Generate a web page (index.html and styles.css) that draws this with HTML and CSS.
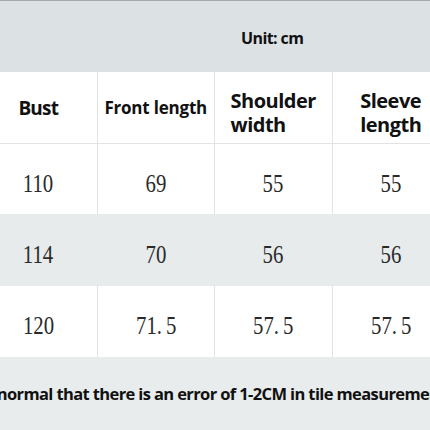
FILE: index.html
```html
<!DOCTYPE html>
<html lang="en">
<head>
<meta charset="utf-8">
<title>Size chart</title>
<link rel="stylesheet" href="styles.css">
</head>
<body>
<div class="page">
  <div class="unit-band"><span class="unit">Unit: cm</span></div>
  <div class="row head">
    <div class="cell"><span class="h-bust">Bust</span></div>
    <div class="cell"><span class="h-front">Front length</span></div>
    <div class="cell"><span class="h-two">Shoulder<br>width</span></div>
    <div class="cell"><span class="h-two">Sleeve<br>length</span></div>
  </div>
  <div class="row data r1">
    <div class="cell"><span class="num">110</span></div>
    <div class="cell"><span class="num">69</span></div>
    <div class="cell"><span class="num">55</span></div>
    <div class="cell"><span class="num">55</span></div>
  </div>
  <div class="row data r2 shade">
    <div class="cell"><span class="num">114</span></div>
    <div class="cell"><span class="num">70</span></div>
    <div class="cell"><span class="num">56</span></div>
    <div class="cell"><span class="num">56</span></div>
  </div>
  <div class="row data r3">
    <div class="cell"><span class="num">120</span></div>
    <div class="cell"><span class="num">71<span class="dot">.</span>5</span></div>
    <div class="cell"><span class="num">57<span class="dot">.</span>5</span></div>
    <div class="cell"><span class="num">57<span class="dot">.</span>5</span></div>
  </div>
  <div class="note"><p class="note-text">It is normal that there is an error of 1-2CM in tile measurement.</p></div>
</div>
</body>
</html>
```
FILE: styles.css
```css
html, body {
  margin: 0;
  padding: 0;
  background: #e8ecec;
}
.page {
  width: 430px;
  height: 430px;
  overflow: hidden;
  font-family: "Open Sans", "Liberation Sans", sans-serif;
  color: #111;
}
.unit-band {
  box-sizing: border-box;
  height: 72px;
  border-top: 1px solid #a4abae;
  background: #dce2e4;
  padding: 29px 0 0 241px;
}
.unit {
  font-weight: 700;
  font-size: 16px;
  line-height: 16px;
  letter-spacing: -0.6px;
  display: block;
}
.row {
  display: grid;
  grid-template-columns: repeat(4, 117.5px);
  margin-left: -20px;
  width: 470px;
  background: #fff;
}
.cell {
  box-sizing: border-box;
  border-right: 1px solid #e2e4e4;
  display: flex;
  align-items: center;
  justify-content: center;
}
.head {
  height: 72px;
  border-bottom: 1px solid #e2e4e4;
  box-sizing: border-box;
}
.head .cell {
  font-weight: 700;
}
.h-bust {
  font-size: 19px;
  line-height: 24px;
  letter-spacing: -0.8px;
}
.h-front {
  font-size: 17px;
  line-height: 24px;
  letter-spacing: -0.2px;
  padding-top: 1px;
}
.h-two {
  font-size: 20px;
  line-height: 24px;
  letter-spacing: -0.5px;
  text-align: left;
  padding-top: 10px;
}
.data .cell {
  padding-top: 9px;
}
.r1 { height: 70px; }
.r2 { height: 72px; }
.r3 { height: 71px; }
.shade {
  background: #e7ebec;
}
.shade .cell {
  border-right-color: #e7ebec;
}
.num {
  display: inline-block;
  font-family: "Liberation Serif", "DejaVu Serif", serif;
  font-size: 26px;
  line-height: 30px;
  color: #2a2a2a;
  transform: scaleX(0.8);
}
.dot {
  margin-right: 5px;
}
.note {
  height: 73px;
  display: flex;
  align-items: center;
  background: #e8ecec;
}
.note-text {
  margin: 0 0 0 -34px;
  white-space: nowrap;
  font-weight: 700;
  font-size: 16.5px;
  line-height: 24px;
  letter-spacing: -0.62px;
  color: #111;
}
```
